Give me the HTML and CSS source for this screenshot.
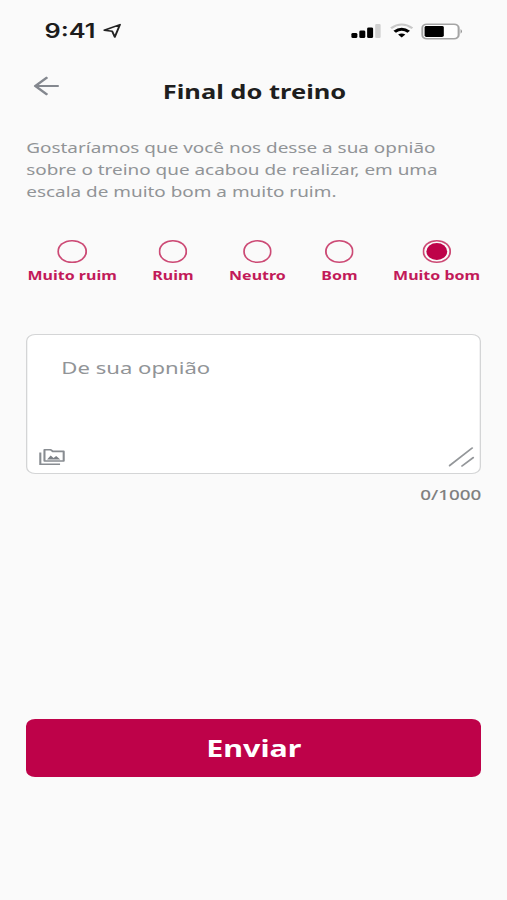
FILE: index.html
```html
<!DOCTYPE html>
<html lang="pt-BR">
<head>
  <meta charset="UTF-8">
  <meta name="viewport" content="width=device-width, initial-scale=1.0">
  <title>Final do treino</title>
  <link rel="stylesheet" href="styles.css">
</head>
<body>
  <div class="screen">
    <!-- Status bar -->
    <div class="status-bar">
      <span class="time">9:41</span>
      <svg class="location" width="15" height="16" viewBox="0 0 15 16">
        <path d="M1.2 7.2 L13.3 1.6 L9.3 14 L7.3 8.2 Z" fill="none" stroke="#222" stroke-width="1.5" stroke-linejoin="round"/>
      </svg>
      <svg class="signal" width="24" height="16" viewBox="0 0 24 16">
        <rect x="0.3" y="10" width="4.6" height="5" rx="1.2"/>
        <rect x="6.4" y="7.6" width="4.6" height="7.4" rx="1.2"/>
        <rect x="12.4" y="4.6" width="4.6" height="10.4" rx="1.2"/>
        <rect x="18.6" y="1" width="4.2" height="14" rx="1" fill="#d0d0d0"/>
      </svg>
      <svg class="wifi" width="18" height="16" viewBox="0 0 18 16">
        <path d="M0.8 5.2 Q9 -2.2 17.2 5.2" fill="none" stroke="#c9c9c9" stroke-width="2"/>
        <path d="M3.6 8.8 Q9 3.6 14.4 8.8" fill="none" stroke="#000" stroke-width="2.8"/>
        <path d="M6.2 11.4 Q9 9.4 11.8 11.4 L9 14.6 Z"/>
      </svg>
      <svg class="battery" width="33" height="17" viewBox="0 0 33 17">
        <rect x="0.8" y="1.3" width="28" height="14.4" rx="3.6" fill="#fff" stroke="#a5a5a5" stroke-width="1.6"/>
        <rect x="2.6" y="3" width="14.8" height="11" rx="1.4"/>
        <path d="M30.3 6 Q32.6 8.4 30.3 10.8 Z" fill="#999"/>
      </svg>
    </div>

    <!-- Header -->
    <div class="header">
      <svg class="back" width="20" height="20" viewBox="0 0 20 20">
        <path d="M19.2 10 H1.2 M10.4 1.2 L1.2 10 L10.4 18.8" fill="none" stroke="#84888f" stroke-width="2.2"/>
      </svg>
      <h1>Final do treino</h1>
    </div>

    <p class="intro">Gostaríamos que você nos desse a sua opnião<br>sobre o treino que acabou de realizar, em uma<br>escala de muito bom a muito ruim.</p>

    <!-- Rating options -->
    <div class="rating">
      <div class="option"><span class="radio"></span><span class="label">Muito ruim</span></div>
      <div class="option"><span class="radio"></span><span class="label">Ruim</span></div>
      <div class="option"><span class="radio"></span><span class="label">Neutro</span></div>
      <div class="option"><span class="radio"></span><span class="label">Bom</span></div>
      <div class="option"><span class="radio checked"></span><span class="label">Muito bom</span></div>
    </div>

    <!-- Comment box -->
    <div class="comment">
      <span class="placeholder">De sua opnião</span>
      <div class="comment-tools">
        <svg width="20" height="18" viewBox="0 0 20 18">
          <path d="M4.2 1.8 H9 L10.6 3.4 H19 V13 H4.2 Z" fill="none" stroke="#888c91" stroke-width="1.6" stroke-linejoin="round"/>
          <path d="M1 4.4 V16.2 H16.2" fill="none" stroke="#888c91" stroke-width="1.6"/>
          <path d="M6.2 11.4 L9 7.4 L11.2 10 L13.2 8 L16.4 11.4 Z" fill="#7c8086"/>
        </svg>
        <svg width="20" height="20" viewBox="0 0 20 20">
          <path d="M0.8 18.6 L18.2 1 M10.4 19 L19 10.6" fill="none" stroke="#94979a" stroke-width="1.5" stroke-linecap="round"/>
        </svg>
      </div>
    </div>
    <div class="counter">0/1000</div>

    <button class="send">Enviar</button>
  </div>
</body>
</html>
```

FILE: styles.css
```css
body {
  margin: 0;
  background-color: #fafafa;
  font-family: "Noto Sans", "Open Sans", sans-serif;
  overflow: hidden;
}

.screen {
  width: 390px;
  height: 900px;
  padding: 0 19.7px 0 20.2px;
  box-sizing: border-box;
  transform: scaleX(1.3);
  transform-origin: 0 0;
  display: flex;
  flex-direction: column;
}

/* Status bar */
.status-bar {
  display: flex;
  align-items: center;
  height: 30px;
  padding: 16px 13px 0 14px;
}

.time {
  font-family: Inter, sans-serif;
  font-size: 19.5px;
  font-weight: 600;
  line-height: 24px;
  color: #1c1c1c;
}

.location {
  margin-left: 5px;
}

.signal {
  margin-left: auto;
}

.wifi {
  margin: 0 6px 0 6px;
}

/* Header */
.header {
  display: flex;
  height: 60px;
  margin-top: 30px;
}

.back {
  margin-left: 6px;
}

h1 {
  flex: 1;
  margin: 0 25px 0 0;
  padding-top: 3px;
  font-size: 19.6px;
  line-height: 26px;
  text-align: center;
  color: #1e1e1e;
}

.intro {
  margin: 0;
  font-size: 14.55px;
  line-height: 22px;
  white-space: nowrap;
  color: #919497;
}

/* Rating */
.rating {
  display: flex;
  justify-content: space-between;
  margin: 38px 1px 0;
}

.option {
  display: flex;
  flex-direction: column;
  align-items: center;
}

.radio {
  width: 22.5px;
  height: 23px;
  box-sizing: border-box;
  border-radius: 50%;
  box-shadow: inset 0 0 0 1.4px #cc4a75;
}

.radio.checked {
  padding: 3px;
  background-color: #be0249;
  background-clip: content-box;
}

.label {
  margin-top: 4px;
  font-size: 12.3px;
  font-weight: 700;
  line-height: 18px;
  color: #c21a59;
}

/* Comment box */
.comment {
  display: flex;
  flex-direction: column;
  justify-content: space-between;
  height: 140px;
  margin-top: 49px;
  padding: 20px 4px 6px 9px;
  box-sizing: border-box;
  border: 1.5px solid #d4d5d6;
  border-radius: 7px;
  background-color: #fff;
}

.placeholder {
  margin-left: 17px;
  font-size: 17px;
  line-height: 26px;
  color: #919497;
}

.comment-tools {
  display: flex;
  justify-content: space-between;
  align-items: center;
}

.counter {
  margin-top: 10px;
  font-size: 14.5px;
  font-weight: 500;
  line-height: 20px;
  text-align: right;
  color: #808080;
}

.send {
  height: 58px;
  margin-top: 215px;
  border: none;
  border-radius: 7px;
  background-color: #be0249;
  font-family: inherit;
  font-size: 23.4px;
  font-weight: 700;
  color: #fff;
}
```
